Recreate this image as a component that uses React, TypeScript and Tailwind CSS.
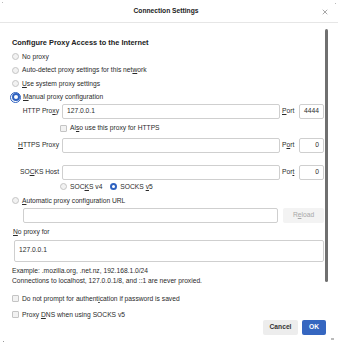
import { X } from "lucide-react";

function U({ children }: { children: React.ReactNode }) {
  return <span className="underline underline-offset-[1px]">{children}</span>;
}

function Radio({ checked, focus, label }: { checked?: boolean; focus?: boolean; label: React.ReactNode }) {
  return (
    <div className="flex items-center gap-[3px]">
      {focus ? (
        <span className="w-[11px] h-[11px] -ml-[2px] -mr-[1px] rounded-full border border-[#2f62c0] flex items-center justify-center">
          <span className="w-[8px] h-[8px] rounded-full border-[2px] border-[#2f62c0] bg-white" />
        </span>
      ) : checked ? (
        <span className="w-[7px] h-[7px] rounded-full border-[2px] border-[#2f62c0] bg-white" />
      ) : (
        <span className="w-[7px] h-[7px] rounded-full border border-[#c4c4c4] bg-[#f2f2f2]" />
      )}
      <span>{label}</span>
    </div>
  );
}

function Check({ label }: { label: React.ReactNode }) {
  return (
    <div className="flex items-center gap-[3px]">
      <span className="w-[7px] h-[7px] rounded-[1px] border border-[#c4c4c4] bg-[#f2f2f2]" />
      <span>{label}</span>
    </div>
  );
}

function ProxyRow({ label, port, value, portLabel }: { label: React.ReactNode; port: string; value?: string; portLabel: React.ReactNode }) {
  return (
    <div className="flex items-center h-[15px]">
      <div className="w-[47px] text-right">{label}</div>
      <div className="flex-1 h-full ml-[3px] border border-[#cfcfcf] rounded-[2px] flex items-center px-[4px]">{value}</div>
      <div className="w-[13px] ml-[2px]">{portLabel}</div>
      <div className="w-[25px] h-full ml-[4px] border border-[#cfcfcf] rounded-[2px] flex items-center justify-end px-[4px]">{port}</div>
    </div>
  );
}

export default function App() {
  return (
    <div className="w-[338px] h-[346px] bg-white relative overflow-hidden font-['Liberation_Sans',sans-serif] text-[6.7px] text-[#2a2a2a]">
      <div className="h-[23px] border-b border-[#e6e6e6] flex items-center justify-center relative">
        <span className="font-bold text-[6.7px] text-[#222] -ml-[6px]">Connection Settings</span>
        <X className="absolute left-[321px] top-[8px] text-[#444]" size={8} strokeWidth={1.4} />
      </div>

      <div className="pl-[12px] pr-[14px] pt-[14px]">
        <div className="h-[11px] flex items-center font-bold text-[7.4px] text-[#222]">Configure Proxy Access to the Internet</div>
        <div className="mt-[2px] h-[13.5px] flex items-center"><Radio label="No proxy" /></div>
        <div className="h-[13.5px] flex items-center"><Radio label={<>Auto-detect proxy settings for this net<U>w</U>ork</>} /></div>
        <div className="h-[13.5px] flex items-center"><Radio label={<><U>U</U>se system proxy settings</>} /></div>
        <div className="h-[13.5px] flex items-center"><Radio focus label={<><U>M</U>anual proxy configuration</>} /></div>

        <ProxyRow label={<>HTTP Pro<U>x</U>y</>} value="127.0.0.1" portLabel={<><U>P</U>ort</>} port="4444" />
        <div className="mt-[2px] h-[15px] flex items-center pl-[48px]"><Check label={<>Al<U>s</U>o use this proxy for HTTPS</>} /></div>
        <div className="mt-[2px]">
          <ProxyRow label={<><U>H</U>TTPS Proxy</>} portLabel={<>P<U>o</U>rt</>} port="0" />
        </div>
        <div className="mt-[12px]">
          <ProxyRow label={<>SO<U>C</U>KS Host</>} portLabel={<>Por<U>t</U></>} port="0" />
        </div>
        <div className="h-[14px] flex items-center pl-[48px] gap-[8px]">
          <Radio label={<>SOC<U>K</U>S v4</>} />
          <Radio checked label={<>SOCKS <U>v</U>5</>} />
        </div>
        <div className="h-[14px] flex items-center"><Radio label={<><U>A</U>utomatic proxy configuration URL</>} /></div>
        <div className="flex items-center h-[15px] pl-[11px]">
          <div className="flex-1 h-full border border-[#cfcfcf] rounded-[2px]" />
          <div className="w-[41px] h-full ml-[5px] bg-[#f3f3f3] rounded-[2px] flex items-center justify-center text-[#a8a8a8]">R<U>e</U>load</div>
        </div>
        <div className="mt-[4px] h-[10px] flex items-center pl-[1px]"><U>N</U>o proxy for</div>
        <div className="mt-[3px] ml-[2px] h-[22px] border border-[#cfcfcf] rounded-[2px] px-[4px] pt-[4px]">127.0.0.1</div>
        <div className="mt-[4px] h-[10px] flex items-center">Example: .mozilla.org, .net.nz, 192.168.1.0/24</div>
        <div className="h-[11px] flex items-center">Connections to localhost, 127.0.0.1/8, and ::1 are never proxied.</div>
        <div className="mt-[6px] h-[12px] flex items-center"><Check label={<>Do not prompt for authent<U>i</U>cation if password is saved</>} /></div>
        <div className="mt-[4px] flex items-start">
          <div className="h-[12px] flex items-center flex-1"><Check label={<>Proxy <U>D</U>NS when using SOCKS v5</>} /></div>
          <div className="mt-[11px] flex gap-[4px] -mr-[2px]">
            <button className="w-[35px] h-[15px] bg-[#ededed] rounded-[2px] font-bold text-[#333]">Cancel</button>
            <button className="w-[24px] h-[15px] bg-[#3566c0] rounded-[2px] font-bold text-white">OK</button>
          </div>
        </div>
      </div>

      <div className="absolute left-[325px] top-[29px] w-[3px] h-[253px] bg-[#707070] rounded-full" />

      <div className="absolute left-[2px] top-[2px] w-[1px] h-[1px] bg-[#bbb]" />
      <div className="absolute left-[335px] top-[3px] w-[1px] h-[1px] bg-[#bbb]" />
      <div className="absolute left-[3px] top-[341px] w-[1px] h-[1px] bg-[#999]" />
      <div className="absolute left-[331px] top-[338px] w-[3px] h-[2px] bg-[#bbb]" />
    </div>
  );
}
